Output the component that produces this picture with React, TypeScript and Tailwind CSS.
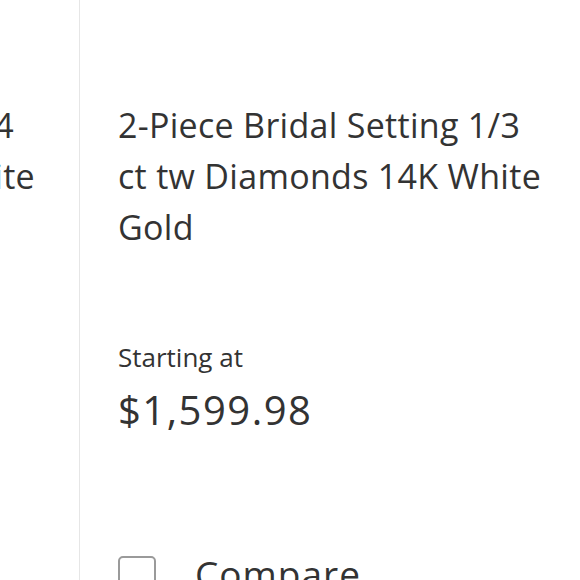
const font = "font-['Open_Sans',sans-serif]";

export default function App() {
  return (
    <div className={`flex h-[580px] w-[580px] overflow-hidden bg-white text-[#333333] ${font}`}>
      {/* previous card, mostly scrolled off to the left */}
      <div className="w-[80px] shrink-0 overflow-hidden border-r border-[#e6e6e6]">
        <div className="pt-[100px] text-[34px] leading-[51px] tracking-[0.3px]">
          <div className="mr-[65px] flex justify-end whitespace-nowrap">
            <span>Round Solitaire Ring 1/4</span>
          </div>
          <div className="mr-[44px] flex justify-end whitespace-nowrap">
            <span>ct tw Diamond 14K White</span>
          </div>
        </div>
      </div>

      <div className="flex w-[500px] shrink-0 flex-col px-[38px] pt-[100px]">
        <h3 className="text-[34px] leading-[51px] tracking-[0.3px]">
          2-Piece Bridal Setting 1/3 ct tw Diamonds 14K White Gold
        </h3>
        <p className="mt-[86px] text-[26px] leading-[36px]">Starting at</p>
        <p className="mt-[9px] text-[40px] leading-[52px] tracking-[1.5px]">$1,599.98</p>
        <label className="mt-[112px] flex items-start gap-[39px]">
          <span className="mt-[8px] h-[38px] w-[38px] shrink-0 rounded-[5px] border-2 border-[#9a9a9a]" />
          <span className="text-[37px] leading-[52px] tracking-[1px]">Compare</span>
        </label>
      </div>
    </div>
  );
}
